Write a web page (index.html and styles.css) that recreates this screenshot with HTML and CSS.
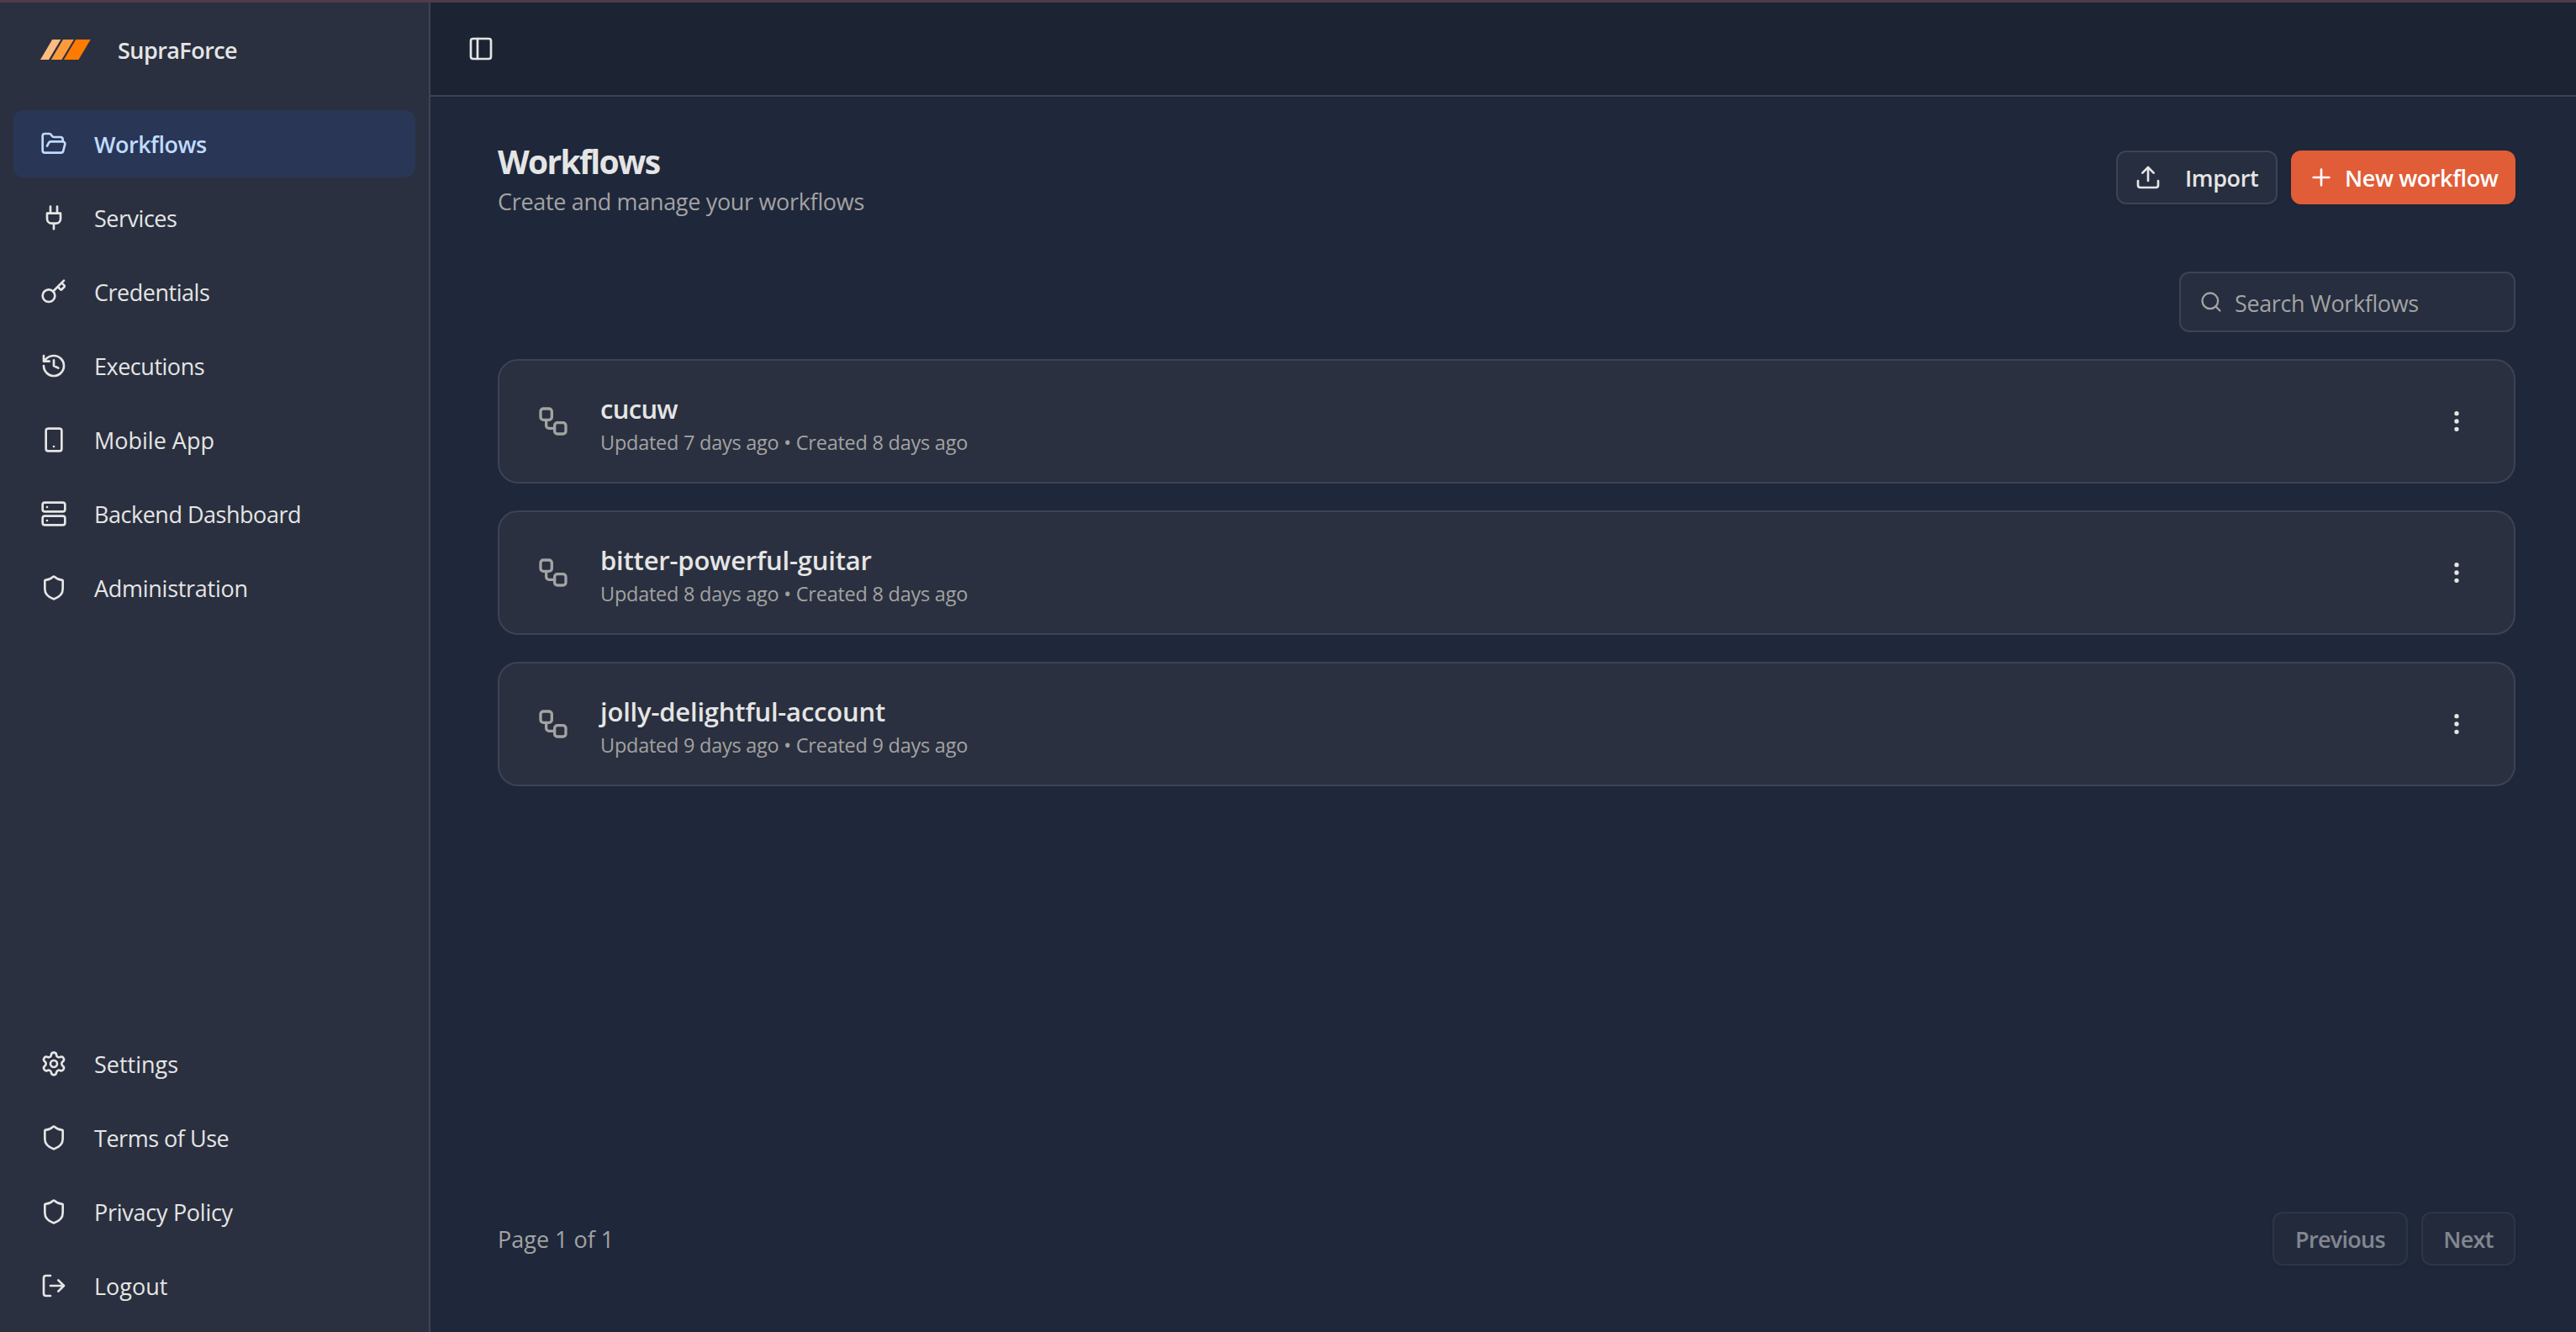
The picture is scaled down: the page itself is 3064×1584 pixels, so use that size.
FILE: index.html
```html
<!DOCTYPE html>
<html lang="en">
<head>
<meta charset="utf-8">
<title>SupraForce – Workflows</title>
<link rel="stylesheet" href="styles.css">
</head>
<body>
<svg width="0" height="0" class="sprite" aria-hidden="true">
  <symbol id="i-folder" viewBox="0 0 24 24"><path d="m6 14 1.5-2.9A2 2 0 0 1 9.24 10H20a2 2 0 0 1 1.94 2.5l-1.54 6a2 2 0 0 1-1.95 1.5H4a2 2 0 0 1-2-2V5a2 2 0 0 1 2-2h3.9a2 2 0 0 1 1.69.9l.81 1.2a2 2 0 0 0 1.67.9H18a2 2 0 0 1 2 2v2"/></symbol>
  <symbol id="i-plug" viewBox="0 0 24 24"><path d="M12 22v-5M9 8V2M15 8V2M18 8v5a4 4 0 0 1-4 4h-4a4 4 0 0 1-4-4V8Z"/></symbol>
  <symbol id="i-key" viewBox="0 0 24 24"><path d="m15.5 7.5 2.3 2.3a1 1 0 0 0 1.4 0l2.1-2.1a1 1 0 0 0 0-1.4L19 4M21 2l-9.6 9.6"/><circle cx="7.5" cy="15.5" r="5.5"/></symbol>
  <symbol id="i-history" viewBox="0 0 24 24"><path d="M3 12a9 9 0 1 0 9-9 9.75 9.75 0 0 0-6.74 2.74L3 8M3 3v5h5M12 7v5l4 2"/></symbol>
  <symbol id="i-phone" viewBox="0 0 24 24"><rect x="5" y="2" width="14" height="20" rx="2"/><path d="M12 18h.01"/></symbol>
  <symbol id="i-server" viewBox="0 0 24 24"><rect x="2" y="2" width="20" height="8" rx="2"/><rect x="2" y="14" width="20" height="8" rx="2"/><path d="M6 6h.01M6 18h.01"/></symbol>
  <symbol id="i-shield" viewBox="0 0 24 24"><path d="M20 13c0 5-3.5 7.5-7.66 8.95a1 1 0 0 1-.67-.01C7.5 20.5 4 18 4 13V6a1 1 0 0 1 1-1c2 0 4.5-1.2 6.24-2.72a1.17 1.17 0 0 1 1.52 0C14.51 3.81 17 5 19 5a1 1 0 0 1 1 1z"/></symbol>
  <symbol id="i-settings" viewBox="0 0 24 24"><path d="M9.671 4.136a2.34 2.34 0 0 1 4.659 0 2.34 2.34 0 0 0 3.319 1.915 2.34 2.34 0 0 1 2.33 4.033 2.34 2.34 0 0 0 0 3.831 2.34 2.34 0 0 1-2.33 4.033 2.34 2.34 0 0 0-3.319 1.915 2.34 2.34 0 0 1-4.659 0 2.34 2.34 0 0 0-3.32-1.915 2.34 2.34 0 0 1-2.33-4.033 2.34 2.34 0 0 0 0-3.831A2.34 2.34 0 0 1 6.35 6.051a2.34 2.34 0 0 0 3.319-1.915"/><circle cx="12" cy="12" r="3"/></symbol>
  <symbol id="i-logout" viewBox="0 0 24 24"><path d="m16 17 5-5-5-5M21 12H9M9 21H5a2 2 0 0 1-2-2V5a2 2 0 0 1 2-2h4"/></symbol>
  <symbol id="i-panel" viewBox="0 0 24 24"><rect x="3" y="3" width="18" height="18" rx="2"/><path d="M9 3v18"/></symbol>
  <symbol id="i-upload" viewBox="0 0 24 24"><path d="M12 3v12M17 8l-5-5-5 5M21 15v4a2 2 0 0 1-2 2H5a2 2 0 0 1-2-2v-4"/></symbol>
  <symbol id="i-plus" viewBox="0 0 24 24"><path d="M5 12h14M12 5v14"/></symbol>
  <symbol id="i-search" viewBox="0 0 24 24"><path d="m21 21-4.34-4.34"/><circle cx="11" cy="11" r="8"/></symbol>
  <symbol id="i-workflow" viewBox="0 0 24 24"><rect x="3" y="3" width="8" height="8" rx="2"/><path d="M7 11v4a2 2 0 0 0 2 2h4"/><rect x="13" y="13" width="8" height="8" rx="2"/></symbol>
  <symbol id="i-more" viewBox="0 0 24 24"><circle cx="12" cy="12" r="1"/><circle cx="12" cy="5" r="1"/><circle cx="12" cy="19" r="1"/></symbol>
</svg>

<div class="app">
  <aside class="sidebar">
    <div class="brand">
      <svg class="logo" viewBox="0 0 60 24"><path fill="#ffbc80" d="M14.2 0h10.1L10 24H0z"/><path fill="#ff9a3c" d="M27 0h12.8L25.4 24H12.8z"/><path fill="#ff7a00" d="M42.2 0h17.5L45.5 24H27.9z"/></svg>
      <span class="brand-name">SupraForce</span>
    </div>
    <nav class="menu">
      <a class="item active"><svg class="icon"><use href="#i-folder"/></svg><span>Workflows</span></a>
      <a class="item"><svg class="icon"><use href="#i-plug"/></svg><span class="tight">Services</span></a>
      <a class="item"><svg class="icon"><use href="#i-key"/></svg><span class="tight">Credentials</span></a>
      <a class="item"><svg class="icon"><use href="#i-history"/></svg><span class="tight">Executions</span></a>
      <a class="item"><svg class="icon"><use href="#i-phone"/></svg><span class="loose">Mobile App</span></a>
      <a class="item"><svg class="icon"><use href="#i-server"/></svg><span class="tight">Backend Dashboard</span></a>
      <a class="item"><svg class="icon"><use href="#i-shield"/></svg><span>Administration</span></a>
    </nav>
    <nav class="menu menu-bottom">
      <a class="item"><svg class="icon"><use href="#i-settings"/></svg><span class="loose">Settings</span></a>
      <a class="item"><svg class="icon"><use href="#i-shield"/></svg><span class="tight">Terms of Use</span></a>
      <a class="item"><svg class="icon"><use href="#i-shield"/></svg><span>Privacy Policy</span></a>
      <a class="item"><svg class="icon"><use href="#i-logout"/></svg><span class="loose">Logout</span></a>
    </nav>
  </aside>

  <div class="page">
    <header class="topbar"><svg class="icon"><use href="#i-panel"/></svg></header>
    <main class="content">
      <div class="heading">
        <div class="titles">
          <h1>Workflows</h1>
          <p class="subtitle">Create and manage your workflows</p>
        </div>
        <div class="actions">
          <button class="btn btn-import"><svg class="icon"><use href="#i-upload"/></svg><span>Import</span></button>
          <button class="btn btn-new"><svg class="icon"><use href="#i-plus"/></svg><span>New workflow</span></button>
        </div>
      </div>
      <div class="search"><svg class="icon"><use href="#i-search"/></svg><span>Search Workflows</span></div>
      <div class="list">
        <article class="card">
          <svg class="icon icon-flow"><use href="#i-workflow"/></svg>
          <div class="info"><h2 class="short">cucuw</h2><p>Updated 7 days ago • Created 8 days ago</p></div>
          <svg class="icon"><use href="#i-more"/></svg>
        </article>
        <article class="card">
          <svg class="icon icon-flow"><use href="#i-workflow"/></svg>
          <div class="info"><h2>bitter-powerful-guitar</h2><p>Updated 8 days ago • Created 8 days ago</p></div>
          <svg class="icon"><use href="#i-more"/></svg>
        </article>
        <article class="card">
          <svg class="icon icon-flow"><use href="#i-workflow"/></svg>
          <div class="info"><h2>jolly-delightful-account</h2><p>Updated 9 days ago • Created 9 days ago</p></div>
          <svg class="icon"><use href="#i-more"/></svg>
        </article>
      </div>
      <footer class="pager">
        <span class="page-label">Page 1 of 1</span>
        <div class="pager-buttons">
          <button class="btn btn-prev" disabled><span>Previous</span></button>
          <button class="btn btn-next" disabled><span>Next</span></button>
        </div>
      </footer>
    </main>
  </div>
</div>
</body>
</html>
```
FILE: styles.css
```css
* { box-sizing: border-box; }
html, body { margin: 0; height: 100%; }
body {
  background: #1c2433;
  color: #e5e5e5;
  font: 400 27px/40px "Open Sans", "Noto Sans", sans-serif;
  letter-spacing: -0.27px;
  overflow: hidden;
}
h1, h2, p { margin: 0; }
.sprite { position: absolute; }
.icon {
  width: 32px; height: 32px; flex: none;
  fill: none; stroke: currentColor; stroke-width: 2;
  stroke-linecap: round; stroke-linejoin: round;
}

.app { display: flex; height: 1584px; border-top: 3px solid #533a48; }

.sidebar {
  width: 512px; flex: none;
  display: flex; flex-direction: column;
  background: #2a303f;
  border-right: 2px solid #3d4354;
}
.brand { height: 112px; flex: none; display: flex; align-items: center; padding-left: 48px; }
.logo { width: 60px; height: 24px; margin-right: 32px; }
.brand-name { padding-top: 2px; font-weight: 600; letter-spacing: -0.55px; }
.menu { display: flex; flex-direction: column; gap: 8px; padding: 16px; }
.menu-bottom { margin-top: auto; padding-bottom: 15px; }
.item { display: flex; align-items: center; gap: 32px; height: 80px; padding: 0 32px; border-radius: 12px; }
.item span { padding-top: 2px; }
.item.active { background: #2a3656; color: #bfdbfe; font-weight: 600; letter-spacing: -0.5px; }
.tight { letter-spacing: -0.48px; }
.loose { letter-spacing: 0; }

.page { flex: 1; display: flex; flex-direction: column; min-width: 0; }
.topbar { height: 112px; flex: none; display: flex; align-items: center; padding-left: 44px; border-bottom: 2px solid #3d4354; }
.content { flex: 1; display: flex; flex-direction: column; padding: 48px 72px 79px 80px; background: #1f273a; }
.heading { display: flex; justify-content: space-between; align-items: center; height: 96px; }
.titles { padding-top: 2px; }
h1 { font-size: 39px; line-height: 56px; font-weight: 700; letter-spacing: -1.7px; }
.subtitle { color: #a3a3a3; letter-spacing: -0.32px; }
.actions { display: flex; gap: 16px; }
.btn {
  display: flex; align-items: center; justify-content: center;
  height: 64px; padding: 0;
  border: 2px solid #3d4354; border-radius: 12px;
  background: #262e3f; color: #e5e5e5;
  font: inherit; font-weight: 600; letter-spacing: -0.4px; white-space: nowrap;
  box-shadow: 0 2px 4px rgba(0, 0, 0, .06);
}
.btn span { padding-top: 2px; }
.btn-import { width: 192px; justify-content: flex-start; padding-left: 20px; gap: 28px; }
.btn-new { width: 267px; justify-content: flex-start; padding-left: 20px; gap: 12px; border: 0; background: #e05d38; color: #fff; }
.search {
  align-self: flex-end;
  width: 400px; height: 72px; margin-top: 64px;
  display: flex; align-items: center; gap: 14px; padding-left: 22px;
  border: 2px solid #3d4354; border-radius: 12px;
  background: #262e3f; color: #a3a3a3; letter-spacing: -0.38px;
}
.search span { padding-top: 3px; }
.search .icon { width: 28px; height: 28px; }
.list { display: flex; flex-direction: column; gap: 32px; margin-top: 32px; }
.card {
  display: flex; align-items: center; height: 148px; padding: 0 52px 0 44px;
  border: 2px solid #3d4354; border-radius: 24px; background: #2a303f;
}
.icon-flow { width: 40px; height: 40px; color: #a3a3a3; }
.info { flex: 1; margin-left: 36px; padding-top: 6px; }
h2 { font-size: 31px; line-height: 44px; font-weight: 600; letter-spacing: -0.2px; }
h2.short { letter-spacing: -0.7px; }
.info p { font-size: 23.5px; line-height: 36px; letter-spacing: -0.25px; color: #a3a3a3; }
.pager { margin-top: auto; display: flex; justify-content: space-between; align-items: center; }
.page-label { padding-top: 2px; color: #a3a3a3; letter-spacing: 0; }
.pager-buttons { display: flex; gap: 16px; }
.btn:disabled { opacity: .5; letter-spacing: -0.7px; }
.btn-prev { width: 161px; }
.btn-next { width: 112px; }
```
